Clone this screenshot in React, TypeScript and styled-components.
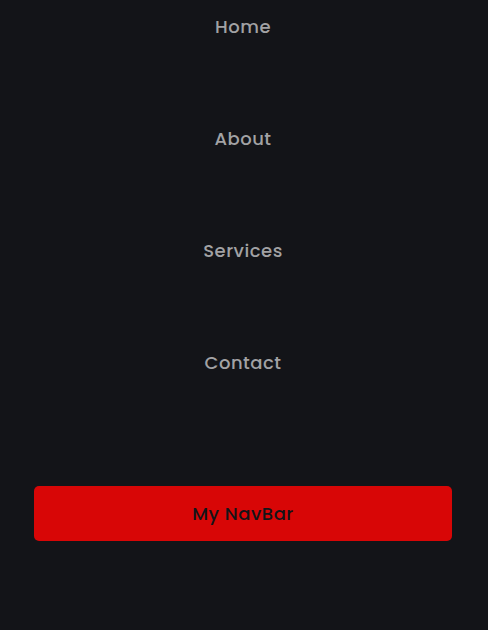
import React from "react";
import styled, { createGlobalStyle } from "styled-components";

const Global = createGlobalStyle`
  html, body { margin: 0; padding: 0; background: #131418; }
  body { font-family: "Poppins", Inter, "Open Sans", sans-serif; }
`;

const Page = styled.div`
  width: 488px;
  height: 630px;
  background: #131418;
  display: flex;
  flex-direction: column;
  align-items: stretch;
  padding: 13px 36px 0 34px;
  box-sizing: border-box;
`;

const Menu = styled.ul`
  list-style: none;
  margin: 0;
  padding: 0;
  display: flex;
  flex-direction: column;
  align-items: center;
  gap: 85px;
`;

const Item = styled.li`
  font-size: 18px;
  line-height: 27px;
  font-weight: 500;
  color: #a2a2a4;
  letter-spacing: 0.5px;
`;

const Brand = styled.button`
  margin-top: 110px;
  height: 55px;
  border: none;
  border-radius: 5px;
  background: #d80606;
  color: #131418;
  font-family: inherit;
  font-size: 18px;
  font-weight: 500;
  letter-spacing: 0.5px;
`;

export default function App() {
  return (
    <>
      <Global />
      <Page>
        <Menu>
          <Item>Home</Item>
          <Item>About</Item>
          <Item>Services</Item>
          <Item>Contact</Item>
        </Menu>
        <Brand>My NavBar</Brand>
      </Page>
    </>
  );
}
